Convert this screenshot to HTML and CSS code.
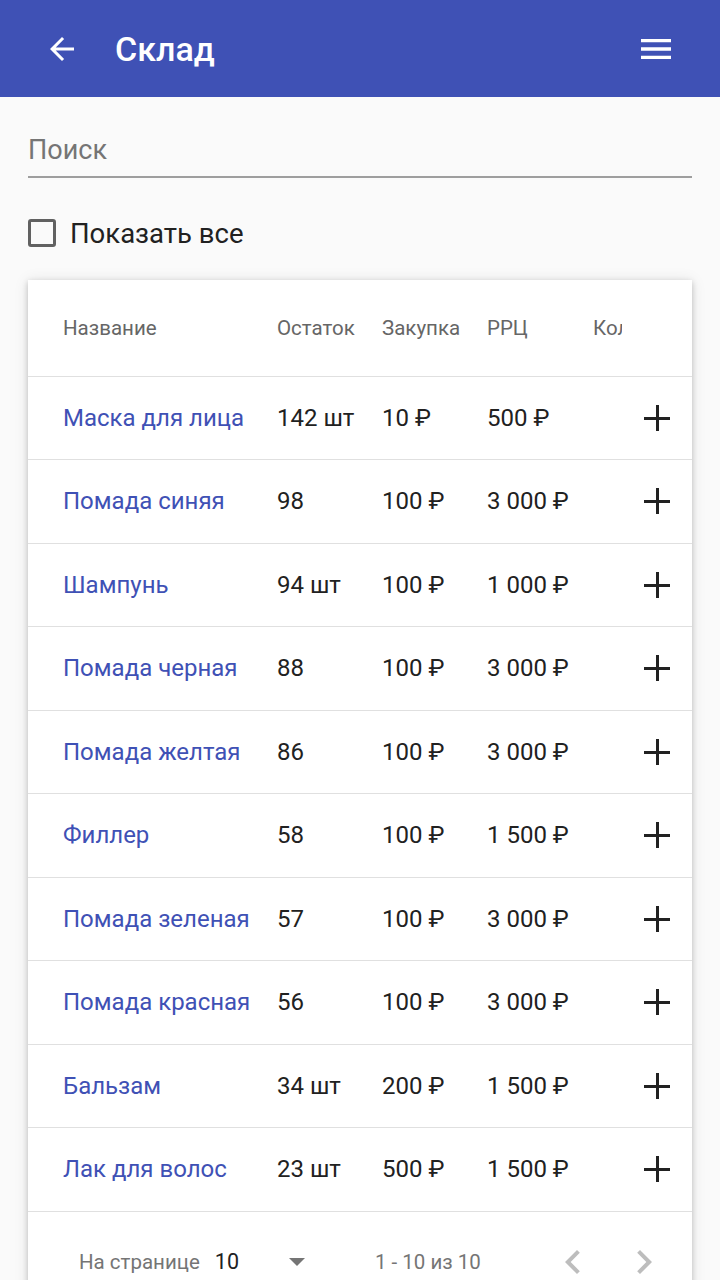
FILE: index.html
```html
<!DOCTYPE html>
<html lang="ru">
<head>
<meta charset="utf-8">
<link rel="stylesheet" href="styles.css">
</head>
<body>
<header class="appbar">
  <svg class="icon back" viewBox="0 0 24 24" width="36" height="36"><path d="M20 11H7.83l5.59-5.59L12 4l-8 8 8 8 1.41-1.41L7.83 13H20v-2z" fill="#fff"/></svg>
  <h1 class="title">Склад</h1>
  <svg class="icon menu" viewBox="0 0 24 24" width="40" height="40"><path d="M3 18h18v-2H3v2zm0-5h18v-2H3v2zm0-7v2h18V6H3z" fill="#fff"/></svg>
</header>
<main class="content">
  <div class="search">Поиск</div>
  <label class="check"><span class="box"></span><span>Показать все</span></label>
  <section class="card">
    <div class="row head">
      <div class="c name">Название</div>
      <div class="c ost">Остаток</div>
      <div class="c buy">Закупка</div>
      <div class="c rrc">РРЦ</div>
      <div class="c kol">Количество</div>
      <div class="c act"></div>
    </div>
    <div class="row"><div class="c name">Маска для лица</div><div class="c ost">142 шт</div><div class="c buy">10 ₽</div><div class="c rrc">500 ₽</div><div class="c kol"></div><div class="c act"><span class="plus"></span></div></div>
    <div class="row"><div class="c name">Помада синяя</div><div class="c ost">98</div><div class="c buy">100 ₽</div><div class="c rrc">3 000 ₽</div><div class="c kol"></div><div class="c act"><span class="plus"></span></div></div>
    <div class="row"><div class="c name">Шампунь</div><div class="c ost">94 шт</div><div class="c buy">100 ₽</div><div class="c rrc">1 000 ₽</div><div class="c kol"></div><div class="c act"><span class="plus"></span></div></div>
    <div class="row"><div class="c name">Помада черная</div><div class="c ost">88</div><div class="c buy">100 ₽</div><div class="c rrc">3 000 ₽</div><div class="c kol"></div><div class="c act"><span class="plus"></span></div></div>
    <div class="row"><div class="c name">Помада желтая</div><div class="c ost">86</div><div class="c buy">100 ₽</div><div class="c rrc">3 000 ₽</div><div class="c kol"></div><div class="c act"><span class="plus"></span></div></div>
    <div class="row"><div class="c name">Филлер</div><div class="c ost">58</div><div class="c buy">100 ₽</div><div class="c rrc">1 500 ₽</div><div class="c kol"></div><div class="c act"><span class="plus"></span></div></div>
    <div class="row"><div class="c name">Помада зеленая</div><div class="c ost">57</div><div class="c buy">100 ₽</div><div class="c rrc">3 000 ₽</div><div class="c kol"></div><div class="c act"><span class="plus"></span></div></div>
    <div class="row"><div class="c name">Помада красная</div><div class="c ost">56</div><div class="c buy">100 ₽</div><div class="c rrc">3 000 ₽</div><div class="c kol"></div><div class="c act"><span class="plus"></span></div></div>
    <div class="row"><div class="c name">Бальзам</div><div class="c ost">34 шт</div><div class="c buy">200 ₽</div><div class="c rrc">1 500 ₽</div><div class="c kol"></div><div class="c act"><span class="plus"></span></div></div>
    <div class="row"><div class="c name">Лак для волос</div><div class="c ost">23 шт</div><div class="c buy">500 ₽</div><div class="c rrc">1 500 ₽</div><div class="c kol"></div><div class="c act"><span class="plus"></span></div></div>
    <div class="pager">
      <span class="lbl">На странице</span>
      <span class="sel">10</span>
      <span class="tri"></span>
      <span class="range">1 - 10 из 10</span>
      <svg class="chev prev" viewBox="0 0 24 24" width="48" height="48"><path d="M15.41 7.41L14 6l-6 6 6 6 1.41-1.41L10.83 12z" fill="#bdbdbd"/></svg>
      <svg class="chev next" viewBox="0 0 24 24" width="48" height="48"><path d="M10 6L8.59 7.41 13.17 12l-4.58 4.59L10 18l6-6z" fill="#bdbdbd"/></svg>
    </div>
  </section>
</main>
</body>
</html>
```
FILE: styles.css
```css
html, body { margin: 0; padding: 0; }
body {
  background: #fafafa;
  font-family: Roboto, "Noto Sans", sans-serif;
  width: 720px;
  height: 1280px;
  overflow: hidden;
}
.appbar {
  height: 97px;
  background: #3f51b5;
  display: flex;
  align-items: center;
  padding: 0 44px 0 44px;
  box-sizing: border-box;
  color: #fff;
}
.back { margin-left: 0; margin-right: 35px; }
.title {
  margin: 0;
  font-size: 34px;
  font-weight: 500;
  flex: 1;
  letter-spacing: 0;
}
.content { padding: 0 28px; }
.search {
  margin-top: 33px;
  height: 46px;
  border-bottom: 2px solid #9e9e9e;
  font-size: 27px;
  color: #757575;
  line-height: 40px;
}
.check {
  display: flex;
  align-items: center;
  margin-top: 38px;
  font-size: 27.5px;
  color: #212121;
  height: 34px;
}
.box {
  width: 22px;
  height: 22px;
  border: 3px solid #616161;
  border-radius: 3px;
  margin-right: 14px;
}
.card {
  margin-top: 30px;
  background: #fff;
  box-shadow: 0 2px 6px rgba(0,0,0,0.2), 0 1px 14px rgba(0,0,0,0.1);
}
.row {
  display: flex;
  align-items: center;
  height: 83.5px;
  border-bottom: 1px solid #e0e0e0;
  box-sizing: border-box;
  font-size: 24px;
  color: #212121;
}
.row.head {
  height: 96.5px;
  font-size: 20.5px;
  color: #666;
  font-weight: 400;
}
.c { white-space: nowrap; overflow: hidden; }
.name { width: 214px; padding-left: 35px; box-sizing: content-box; color: #3f51b5; }
.head .name { color: #666; }
.ost { width: 105px; }
.buy { width: 105px; }
.rrc { width: 106px; }
.kol { width: 29px; }
.act { flex: 1; display: flex; justify-content: flex-end; padding-right: 22px; }
.plus {
  width: 26px; height: 26px; position: relative; display: block;
}
.plus::before, .plus::after {
  content: ""; position: absolute; background: #212121;
}
.plus::before { left: 0; top: 12px; width: 26px; height: 3px; }
.plus::after { top: 0; left: 12px; width: 3px; height: 26px; }
.pager {
  height: 100px;
  display: flex;
  align-items: center;
  font-size: 20.5px;
  color: #757575;
  padding-left: 51px;
  white-space: nowrap;
}
.pager > * { flex-shrink: 0; }
.lbl { margin-right: 15px; }
.sel { color: #212121; font-size: 21.5px; margin-right: 50px; }
.tri {
  width: 0; height: 0;
  border-left: 8px solid transparent;
  border-right: 8px solid transparent;
  border-top: 8px solid #757575;
  margin-right: 70px;
}
.range { margin-right: 68px; }
.chev { margin-top: 0; }
.prev { margin-right: 23px; }
```
